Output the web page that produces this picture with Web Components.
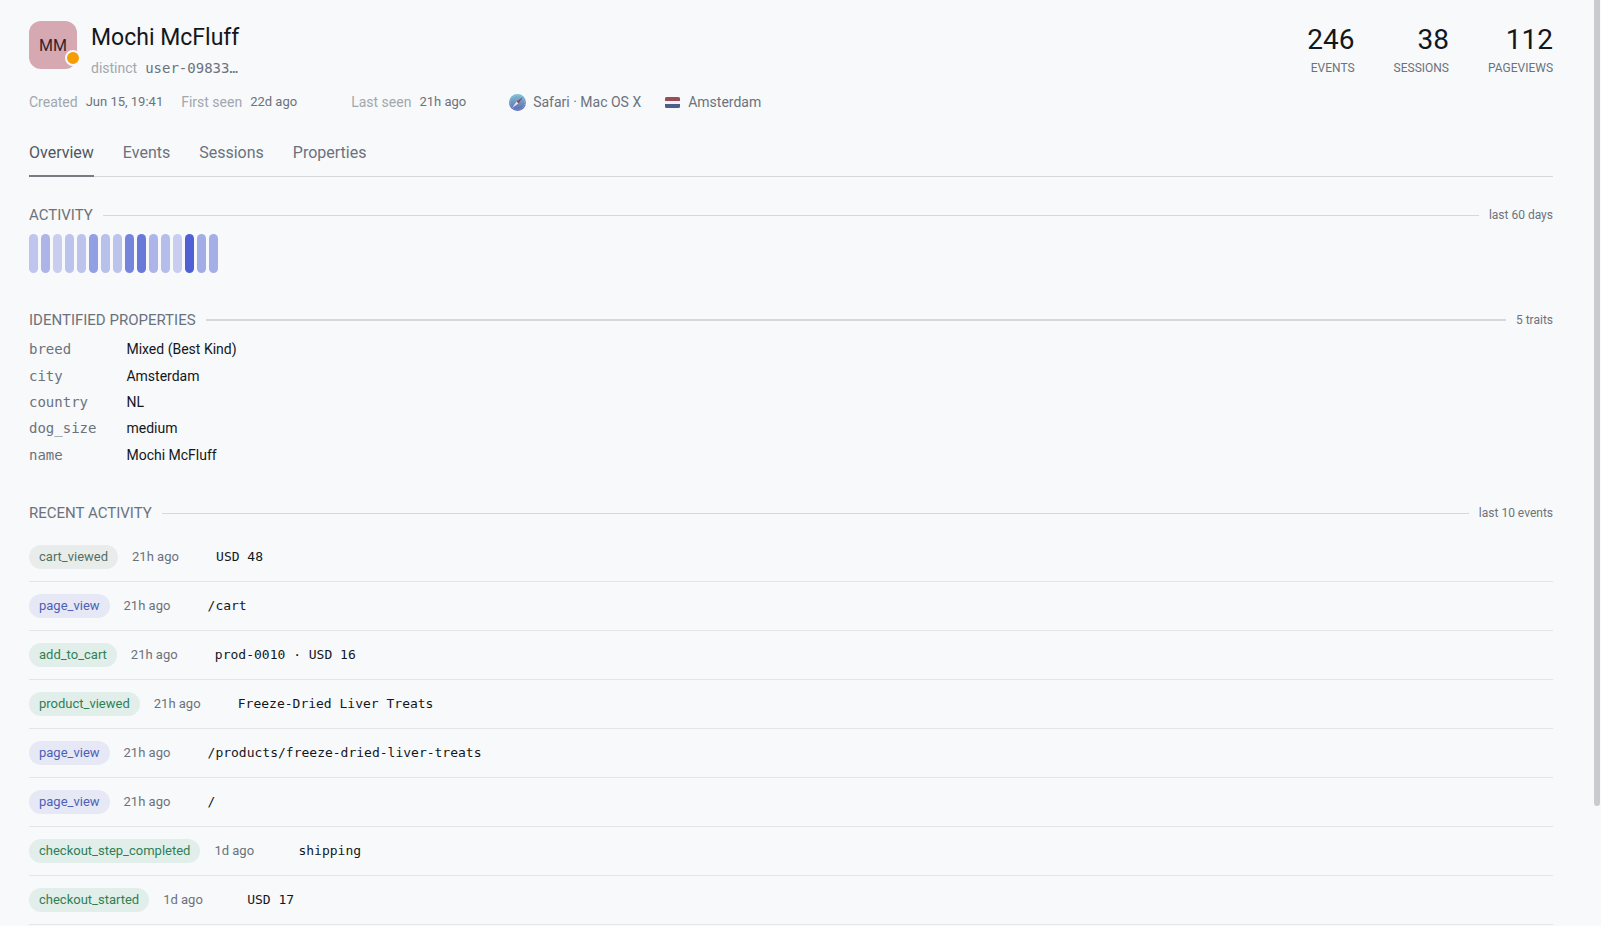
<!DOCTYPE html>
<html lang="en">
<head>
<meta charset="utf-8">
<title>Mochi McFluff</title>
<style>
  body {
    margin: 0;
    background: #f7f9fb;
    color: #13171c;
    font-family: Roboto, "Liberation Sans", sans-serif;
    font-size: 14px;
    --mono: "DejaVu Sans Mono", "Liberation Mono", monospace;
    --muted: #6c727b;
    --faint: #a2a7ae;
    --line: #d5d8dc;
  }
</style>
</head>
<body>
<person-page></person-page>

<script>
const define = (name, html, setup) => {
  const template = document.createElement('template');
  template.innerHTML = html;
  customElements.define(name, class extends HTMLElement {
    connectedCallback() {
      if (this.shadowRoot) return;
      this.attachShadow({ mode: 'open' });
      this.shadowRoot.appendChild(template.content.cloneNode(true));
      setup?.(this, this.shadowRoot);
    }
  });
};

define('person-avatar', /* html */ `
  <style>
    :host {
      position: relative;
      display: flex;
      align-items: center;
      justify-content: center;
      flex: none;
      width: 48px;
      height: 48px;
      border-radius: 12px;
      background: #d6a8b2;
      color: #33242b;
      font-size: 16px;
    }
    .status {
      position: absolute;
      right: -4px;
      bottom: 3px;
      width: 12px;
      height: 12px;
      border: 2px solid #f7f9fb;
      border-radius: 50%;
      background: #f49d05;
    }
  </style>
  <slot></slot>
  <span class="status"></span>
`);

define('stat-item', /* html */ `
  <style>
    :host { display: block; text-align: right; }
    .value { font-size: 28px; line-height: 34px; }
    .label { font-size: 12px; line-height: 22px; color: var(--muted); }
  </style>
  <div class="value"><slot></slot></div>
  <div class="label"></div>
`, (el, root) => {
  root.querySelector('.label').textContent = el.getAttribute('label');
});

define('person-header', /* html */ `
  <style>
    :host { display: flex; justify-content: space-between; align-items: flex-start; }
    .who, .stats { display: flex; }
    .who { gap: 14px; }
    .stats { gap: 39px; padding-top: 2px; }
    h1 { margin: 0; font-size: 23px; font-weight: 400; line-height: 34px; }
    .id { display: flex; gap: 8px; line-height: 26px; color: var(--faint); }
    .id code { font-family: var(--mono); font-size: 14px; color: var(--muted); }
  </style>
  <div class="who">
    <person-avatar>MM</person-avatar>
    <div>
      <h1>Mochi McFluff</h1>
      <div class="id"><span>distinct</span><code>user-09833…</code></div>
    </div>
  </div>
  <div class="stats">
    <stat-item label="EVENTS">246</stat-item>
    <stat-item label="SESSIONS">38</stat-item>
    <stat-item label="PAGEVIEWS">112</stat-item>
  </div>
`);

define('person-meta', /* html */ `
  <style>
    :host { display: flex; gap: 18px; line-height: 20px; color: var(--muted); }
    div { display: flex; align-items: center; gap: 8px; }
    .label { color: var(--faint); }
    .value { font-size: 13px; }
    .first { min-width: 152px; }
    .last { min-width: 140px; }
    .browser { gap: 7px; min-width: 138px; }
    svg { display: block; }
  </style>
  <div><span class="label">Created</span><span class="value">Jun 15, 19:41</span></div>
  <div class="first"><span class="label">First seen</span><span class="value">22d ago</span></div>
  <div class="last"><span class="label">Last seen</span><span class="value">21h ago</span></div>
  <div class="browser">
    <svg width="17" height="17" viewBox="0 0 17 17" aria-hidden="true">
      <defs>
        <linearGradient id="sea" x1="0" y1="0" x2="0" y2="1">
          <stop offset="0" stop-color="#7fc0d4"/>
          <stop offset="1" stop-color="#5c66b0"/>
        </linearGradient>
      </defs>
      <circle cx="8.5" cy="8.5" r="8.5" fill="url(#sea)"/>
      <circle cx="8.5" cy="8.5" r="7.2" fill="none" stroke="#c3d6ea" stroke-width=".8" stroke-dasharray=".5 1.4"/>
      <path d="M13.8 3.2 7.6 7.6l1.8 1.8z" fill="#8d4455"/>
      <path d="M3.2 13.8 7.6 7.6l1.8 1.8z" fill="#dfe6ef"/>
    </svg>
    <span>Safari · Mac OS X</span>
  </div>
  <div>
    <svg width="15" height="11" viewBox="0 0 15 11" aria-hidden="true">
      <rect width="15" height="11" rx="1.5" fill="#f3f3f5"/>
      <path d="M0 4V1.5A1.5 1.5 0 0 1 1.5 0h12A1.5 1.5 0 0 1 15 1.5V4z" fill="#9b4c54"/>
      <path d="M0 7v2.5A1.5 1.5 0 0 0 1.5 11h12A1.5 1.5 0 0 0 15 9.5V7z" fill="#4d5d8c"/>
    </svg>
    <span>Amsterdam</span>
  </div>
`);

define('tab-bar', /* html */ `
  <style>
    :host { display: block; }
    .tabs {
      display: flex;
      gap: 29px;
      box-shadow: inset 0 -1px var(--line);
    }
    button {
      margin: 0;
      padding: 0 0 10px;
      border: none;
      border-bottom: 2px solid transparent;
      background: none;
      color: var(--muted);
      font: inherit;
      font-size: 16px;
      line-height: 24px;
      cursor: pointer;
    }
    button[aria-selected="true"] { color: #51565d; border-color: #787c82; }
  </style>
  <div class="tabs" role="tablist">
    <button role="tab" aria-selected="true">Overview</button>
    <button role="tab" aria-selected="false">Events</button>
    <button role="tab" aria-selected="false">Sessions</button>
    <button role="tab" aria-selected="false">Properties</button>
  </div>
`, (el, root) => {
  const tabs = root.querySelectorAll('button');
  tabs.forEach((tab) => tab.addEventListener('click', () => {
    tabs.forEach((t) => t.setAttribute('aria-selected', String(t === tab)));
  }));
});

define('page-section', /* html */ `
  <style>
    :host { display: block; }
    header { display: flex; align-items: center; gap: 10px; line-height: 20px; color: var(--muted); }
    h2 { margin: 0; font-size: 15px; font-weight: 400; }
    hr { flex: 1; margin: 0; border: none; border-top: var(--rule, 1px) solid var(--line); }
    .note { font-size: 12px; }
  </style>
  <header><h2></h2><hr><span class="note"></span></header>
  <slot></slot>
`, (el, root) => {
  root.querySelector('h2').textContent = el.getAttribute('heading');
  root.querySelector('.note').textContent = el.getAttribute('note');
});

define('activity-bars', /* html */ `
  <style>
    :host { display: flex; gap: 3px; margin-top: 9px; }
    span { width: 9px; height: 39px; border-radius: 5px; }
  </style>
`, (el, root) => {
  const days = ['#bfc5ed', '#adb4e8', '#c9cdee', '#bcc3ed', '#bcc3ed', '#929fe2', '#b8c0ec', '#bcc3ed',
    '#7685dc', '#6979d8', '#adb5e8', '#b5bdeb', '#c9cef0', '#4e60d3', '#a2ade6', '#a5aee6'];
  for (const color of days) {
    const bar = document.createElement('span');
    bar.style.background = color;
    root.append(bar);
  }
});

define('trait-list', /* html */ `
  <style>
    :host { display: block; }
    dl {
      display: grid;
      grid-template-columns: max-content 1fr;
      grid-auto-rows: 1fr;
      align-items: center;
      column-gap: 30px;
      min-height: 132px;
      margin: 6px 0 0;
    }
    dt { font-family: var(--mono); color: var(--muted); }
    dd { margin: 0; }
  </style>
  <dl>
    <dt>breed</dt><dd>Mixed (Best Kind)</dd>
    <dt>city</dt><dd>Amsterdam</dd>
    <dt>country</dt><dd>NL</dd>
    <dt>dog_size</dt><dd>medium</dd>
    <dt>name</dt><dd>Mochi McFluff</dd>
  </dl>
`);

define('event-row', /* html */ `
  <style>
    :host {
      display: flex;
      align-items: center;
      gap: 14px;
      padding: 12px 0;
      border-bottom: 1px solid #e3e5e8;
    }
    .name {
      padding: 0 10px 1px;
      border-radius: 12px;
      background: #e2eeea;
      color: #2f7f56;
      font-size: 13px;
      line-height: 23px;
    }
    :host([kind="page"]) .name { background: #e6e9f5; color: #4c60b8; }
    :host([kind="plain"]) .name { background: #e8edec; color: #53705f; }
    time, code { padding-bottom: 2px; font-size: 13px; }
    time { width: 70px; color: var(--muted); }
    code { font-family: var(--mono); }
  </style>
  <span class="name"></span>
  <time></time>
  <code><slot></slot></code>
`, (el, root) => {
  root.querySelector('.name').textContent = el.getAttribute('name');
  root.querySelector('time').textContent = el.getAttribute('when');
});

define('event-list', /* html */ `
  <style>
    :host { display: block; margin-top: 10px; }
  </style>
  <event-row name="cart_viewed" kind="plain" when="21h ago">USD 48</event-row>
  <event-row name="page_view" kind="page" when="21h ago">/cart</event-row>
  <event-row name="add_to_cart" when="21h ago">prod-0010 · USD 16</event-row>
  <event-row name="product_viewed" when="21h ago">Freeze-Dried Liver Treats</event-row>
  <event-row name="page_view" kind="page" when="21h ago">/products/freeze-dried-liver-treats</event-row>
  <event-row name="page_view" kind="page" when="21h ago">/</event-row>
  <event-row name="checkout_step_completed" when="1d ago">shipping</event-row>
  <event-row name="checkout_started" when="1d ago">USD 17</event-row>
`);

define('person-page', /* html */ `
  <style>
    :host { display: block; padding: 21px 48px 0 29px; }
    person-meta { margin-top: 11px; }
    tab-bar { margin-top: 29px; }
    .activity { margin-top: 28px; }
    .traits { margin-top: 37px; --rule: 2px; }
    .recent { margin-top: 35px; }
    /* scroll thumb, floats over the right edge */
    .thumb {
      position: fixed;
      top: 0;
      right: 1px;
      width: 6px;
      height: 87vh;
      border-radius: 0 0 3px 3px;
      background: #c9cbcf;
    }
  </style>
  <person-header></person-header>
  <person-meta></person-meta>
  <tab-bar></tab-bar>
  <page-section class="activity" heading="ACTIVITY" note="last 60 days">
    <activity-bars></activity-bars>
  </page-section>
  <page-section class="traits" heading="IDENTIFIED PROPERTIES" note="5 traits">
    <trait-list></trait-list>
  </page-section>
  <page-section class="recent" heading="RECENT ACTIVITY" note="last 10 events">
    <event-list></event-list>
  </page-section>
  <div class="thumb"></div>
`);
</script>
</body>
</html>
